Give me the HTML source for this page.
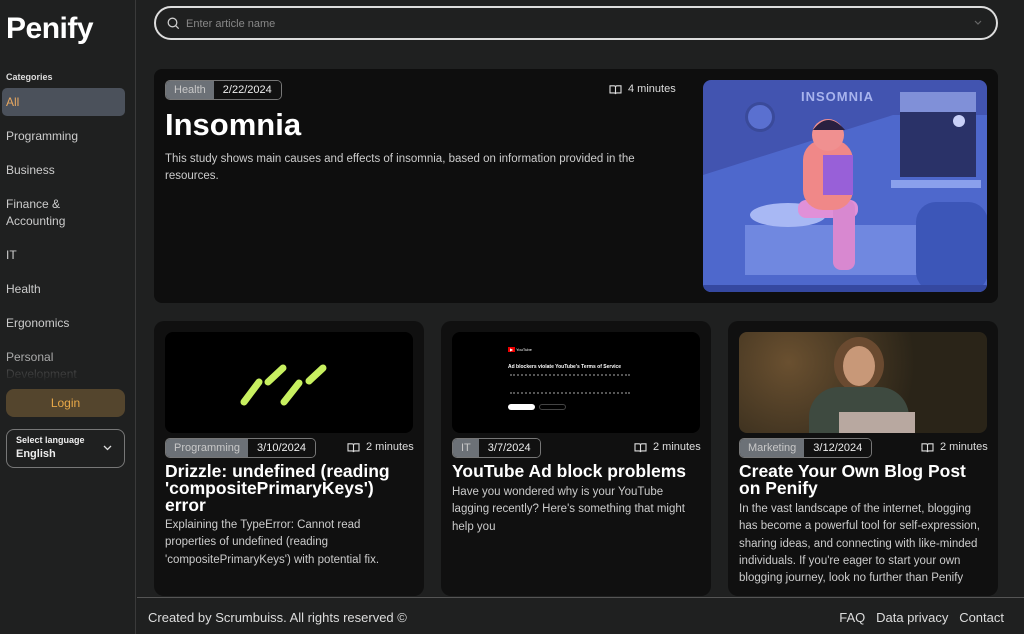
<!DOCTYPE html>
<html><head><meta charset="utf-8"><style>
*{box-sizing:border-box;margin:0;padding:0}
body{width:1024px;height:634px;overflow:hidden;background:#1f2020;font-family:"Liberation Sans",sans-serif;color:#eee;position:relative}
.sb{position:absolute;left:0;top:0;width:136px;height:634px;background:#1f2020;border-right:1px solid #3a3a3a}
.logo{position:absolute;left:6px;top:12px;font-size:30px;font-weight:bold;color:#fff;letter-spacing:-0.5px}
.cat{position:absolute;left:6px;top:72px;font-size:9px;font-weight:bold;color:#ddd}
.all{position:absolute;left:2px;top:88px;width:123px;height:28px;background:#4b515b;border-radius:5px;color:#e8a860;font-size:12px;padding:7px 0 0 4px}
.it{position:absolute;left:6px;font-size:12px;color:#ccc;line-height:17px}
.login{position:absolute;left:6px;top:389px;width:119px;height:28px;background:#54452d;border-radius:8px;color:#e8a848;font-size:12px;text-align:center;line-height:28px}
.lang{position:absolute;left:6px;top:429px;width:119px;height:39px;border:1px solid #777;border-radius:8px;padding:5px 9px;font-size:9px;font-weight:bold;color:#eee}
.lang b{display:block;font-size:11px;margin-top:3px}
.search{position:absolute;left:154px;top:6px;width:844px;height:34px;border:2px solid #ddd;border-radius:17px;font-size:11px;color:#888;padding:10px 0 0 30px}
.hero{position:absolute;left:154px;top:69px;width:844px;height:234px;background:#0e0e0e;border-radius:8px}
.tag{position:absolute;display:flex;height:20px;border:1.5px solid #777;border-radius:5px;font-size:11px;overflow:hidden;line-height:18px}
.tag span:first-child{background:#6c7177;color:#c8c8c8;padding:0 8px}
.tag span:last-child{color:#eee;padding:0 9px;background:#111}
.mins{position:absolute;font-size:11px;color:#ddd;display:flex;align-items:center;gap:6px}
.card{position:absolute;top:321px;width:270px;height:275px;background:#101010;border-radius:10px}
.img{position:absolute;left:11px;top:11px;width:248px;height:101px;border-radius:8px;background:#000;overflow:hidden}
.ct{position:absolute;left:11px;top:142px;white-space:nowrap;font-size:17.5px;font-weight:bold;color:#fff;line-height:17px}
.cd{position:absolute;left:11px;white-space:nowrap;font-size:11.5px;color:#ccc;line-height:17.3px}
.foot{position:absolute;left:137px;top:597px;width:887px;height:37px;border-top:1px solid #555;font-size:13px;color:#ddd}
</style></head><body>
<svg width="0" height="0" style="position:absolute"><defs><symbol id="bk" viewBox="0 0 14 12"><path d="M1 2h4.5a1.5 1.5 0 0 1 1.5 1.5V11a1.2 1.2 0 0 0-1.2-1.2H1zM13 2H8.5A1.5 1.5 0 0 0 7 3.5V11a1.2 1.2 0 0 1 1.2-1.2H13z" fill="none" stroke="#ddd" stroke-width="1.2"/></symbol></defs></svg>
<div class="sb">
<div class="logo">Penify</div>
<div class="cat">Categories</div>
<div class="all">All</div>
<div class="it" style="top:128px">Programming</div>
<div class="it" style="top:162px">Business</div>
<div class="it" style="top:196px">Finance &amp;<br>Accounting</div>
<div class="it" style="top:247px">IT</div>
<div class="it" style="top:281px">Health</div>
<div class="it" style="top:315px">Ergonomics</div>
<div class="it" style="top:349px;color:#aaa">Personal<br><span style="color:#555">Development</span></div>
<div style="position:absolute;left:0;top:366px;width:135px;height:16px;background:linear-gradient(rgba(31,32,32,0),#1f2020)"></div>
<div class="login">Login</div>
<div class="lang">Select language<b>English</b><svg style="position:absolute;right:12px;top:15px" width="9" height="6" viewBox="0 0 9 6"><path d="M1 1l3.5 3.5L8 1" stroke="#ddd" stroke-width="1.3" fill="none"/></svg></div>
</div>
<div class="search"><svg style="position:absolute;left:11px;top:9px" width="13" height="13" viewBox="0 0 13 13"><circle cx="5.5" cy="5.5" r="4.3" stroke="#ccc" stroke-width="1.3" fill="none"/><path d="M8.7 8.7l3 3" stroke="#ccc" stroke-width="1.3"/></svg>Enter article name<svg style="position:absolute;right:14px;top:12px" width="8" height="6" viewBox="0 0 8 6"><path d="M1 1l3 3 3-3" stroke="#666" stroke-width="1.2" fill="none"/></svg></div>

<div class="hero">
<div class="tag" style="left:11px;top:11px"><span>Health</span><span>2/22/2024</span></div>
<div class="mins" style="left:455px;top:14px"><svg width="13" height="11"><use href="#bk"/></svg>4 minutes</div>
<div style="position:absolute;left:11px;top:38px;font-size:31px;font-weight:bold;color:#fff">Insomnia</div>
<div style="position:absolute;left:11px;top:82px;width:500px;font-size:11.5px;color:#ccc;line-height:17px">This study shows main causes and effects of insomnia, based on information provided in the resources.</div>
<svg style="position:absolute;left:549px;top:11px;border-radius:8px" width="284" height="212" viewBox="0 0 284 212">
<rect width="284" height="212" fill="#4254b0"/>
<polygon points="0,95 190,35 284,35 284,212 0,212" fill="#4e68cc"/>
<text x="98" y="21" font-family="Liberation Sans" font-size="13" font-weight="bold" fill="#a8b4ee" letter-spacing="1">INSOMNIA</text>
<circle cx="57" cy="37" r="15" fill="#3a4a9a"/><circle cx="57" cy="37" r="12" fill="#5a70d0"/>
<rect x="197" y="12" width="76" height="85" fill="#2a3268"/><rect x="197" y="12" width="76" height="20" fill="#8090d8"/>
<circle cx="256" cy="41" r="6" fill="#c8d0f8"/>
<rect x="188" y="100" width="90" height="8" fill="#8aa0ec"/>
<rect x="42" y="145" width="180" height="50" fill="#7088e0"/>
<ellipse cx="85" cy="135" rx="38" ry="12" fill="#a8b8f4"/>
<rect x="213" y="122" width="72" height="90" rx="20" fill="#3c56b8"/>
<rect x="95" y="120" width="60" height="18" rx="8" fill="#e090d8"/>
<rect x="130" y="120" width="22" height="70" rx="8" fill="#d888d0"/>
<rect x="100" y="60" width="50" height="70" rx="20" fill="#f08888"/>
<rect x="120" y="75" width="30" height="40" fill="#9860d8"/>
<circle cx="125" cy="55" r="16" fill="#f09090"/><path d="M110 50q15-20 32 0" fill="#2a2040"/>
<rect x="0" y="205" width="284" height="7" fill="#3548a0"/>
</svg>
</div>

<div class="card" style="left:154px">
<div class="img"><svg width="248" height="101"><g stroke="#c8f060" stroke-width="7" stroke-linecap="round"><line x1="79" y1="70" x2="94" y2="50"/><line x1="103" y1="50" x2="118" y2="36"/><line x1="119" y1="70" x2="134" y2="51"/><line x1="144" y1="49" x2="158" y2="36"/></g></svg></div>
<div class="tag" style="left:11px;top:117px"><span>Programming</span><span>3/10/2024</span></div>
<div class="mins" style="left:193px;top:120px"><svg width="13" height="11"><use href="#bk"/></svg>2 minutes</div>
<div class="ct">Drizzle: undefined (reading<br>'compositePrimaryKeys')<br>error</div>
<div class="cd" style="top:196px">Explaining the TypeError: Cannot read<br>properties of undefined (reading<br>'compositePrimaryKeys') with potential fix.</div>
</div>

<div class="card" style="left:441px">
<div class="img"><div style="position:absolute;left:56px;top:15px;font-size:4px;color:#fff"><span style="background:#e00;padding:0 2px">▶</span> YouTube</div><div style="position:absolute;left:56px;top:32px;font-size:5px;font-weight:bold;color:#fff">Ad blockers violate YouTube's Terms of Service</div><div style="position:absolute;left:58px;top:42px;width:120px;height:20px;border-top:2px dotted #555;border-bottom:2px dotted #555"></div><div style="position:absolute;left:56px;top:72px;width:27px;height:6px;background:#fff;border-radius:3px"></div><div style="position:absolute;left:87px;top:72px;width:27px;height:6px;border:1px solid #444;border-radius:3px"></div></div>
<div class="tag" style="left:11px;top:117px"><span>IT</span><span>3/7/2024</span></div>
<div class="mins" style="left:193px;top:120px"><svg width="13" height="11"><use href="#bk"/></svg>2 minutes</div>
<div class="ct">YouTube Ad block problems</div>
<div class="cd" style="top:163px">Have you wondered why is your YouTube<br>lagging recently? Here's something that might<br>help you</div>
</div>

<div class="card" style="left:728px">
<div class="img" style="background:radial-gradient(circle at 20% 30%,#6a5030,#2a2418 60%)"><div style="position:absolute;left:95px;top:5px;width:50px;height:55px;border-radius:50%;background:#6a4a30"></div><div style="position:absolute;left:104px;top:14px;width:32px;height:40px;border-radius:50%;background:#c89878"></div><div style="position:absolute;left:70px;top:55px;width:100px;height:50px;border-radius:30px 30px 0 0;background:#3e4a40"></div><div style="position:absolute;left:100px;top:80px;width:76px;height:25px;background:#b8a8a0"></div></div>
<div class="tag" style="left:11px;top:117px"><span>Marketing</span><span>3/12/2024</span></div>
<div class="mins" style="left:193px;top:120px"><svg width="13" height="11"><use href="#bk"/></svg>2 minutes</div>
<div class="ct">Create Your Own Blog Post<br>on Penify</div>
<div class="cd" style="top:180px">In the vast landscape of the internet, blogging<br>has become a powerful tool for self-expression,<br>sharing ideas, and connecting with like-minded<br>individuals. If you're eager to start your own<br>blogging journey, look no further than Penify</div>
</div>

<div class="foot"><span style="position:absolute;left:11px;top:12px">Created by Scrumbuiss. All rights reserved ©</span><span style="position:absolute;right:20px;top:12px">FAQ&nbsp;&nbsp; Data privacy&nbsp;&nbsp; Contact</span></div>
</body></html>
